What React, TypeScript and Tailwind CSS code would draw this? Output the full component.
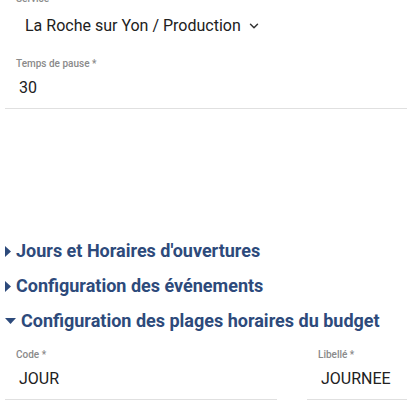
import { ChevronDown } from "lucide-react";

const font = { fontFamily: "Roboto, 'Liberation Sans', sans-serif" };

function Field({ label, value, className }: { label: string; value: string; className?: string }) {
  return (
    <div className={className}>
      <div className="pl-[11px] text-[10px] leading-[12px] font-medium text-[#8a8a8a]">{label}</div>
      <div className="mt-[8px] border-b border-[#e0e0e0] pb-[11px] pl-[14px] text-[16px] leading-[19px] text-[#212121]">
        {value}
      </div>
    </div>
  );
}

function Section({ title, open }: { title: string; open?: boolean }) {
  return (
    <div className="flex items-center gap-[5px] text-[18px] leading-[22px] font-bold text-[#2d4a7b]">
      {open ? (
        <svg width="11" height="6" viewBox="0 0 11 6" className="shrink-0">
          <path d="M0 0h11L5.5 6z" fill="#2d4a7b" />
        </svg>
      ) : (
        <svg width="6" height="11" viewBox="0 0 6 11" className="shrink-0">
          <path d="M0 0l6 5.5L0 11z" fill="#2d4a7b" />
        </svg>
      )}
      <span>{title}</span>
    </div>
  );
}

export default function App() {
  return (
    <div className="h-[408px] w-[407px] overflow-hidden bg-white" style={font}>
      <div className="-mt-[7px] pl-[5px]">
        {/* SERVICE */}
        <div className="pl-[11px] text-[10px] leading-[12px] font-medium text-[#8a8a8a]">Service</div>
        <div className="mt-[11px] flex items-center gap-[6px] pl-[20px] text-[16px] leading-[19px] text-[#212121]">
          <span>La Roche sur Yon / Production</span>
          <ChevronDown size={14} strokeWidth={2.5} className="text-[#333]" />
        </div>

        {/* TEMPS DE PAUSE */}
        <Field label="Temps de pause *" value="30" className="mt-[23px]" />

        {/* SECTIONS */}
        <div className="mt-[131px] flex flex-col gap-[13px]">
          <Section title="Jours et Horaires d'ouvertures" />
          <Section title="Configuration des événements" />
          <Section title="Configuration des plages horaires du budget" open />
        </div>

        {/* CODE / LIBELLE */}
        <div className="mt-[17px] flex gap-[30px]">
          <Field label="Code *" value="JOUR" className="w-[272px]" />
          <Field label="Libellé *" value="JOURNEE" className="flex-1" />
        </div>
      </div>
    </div>
  );
}
